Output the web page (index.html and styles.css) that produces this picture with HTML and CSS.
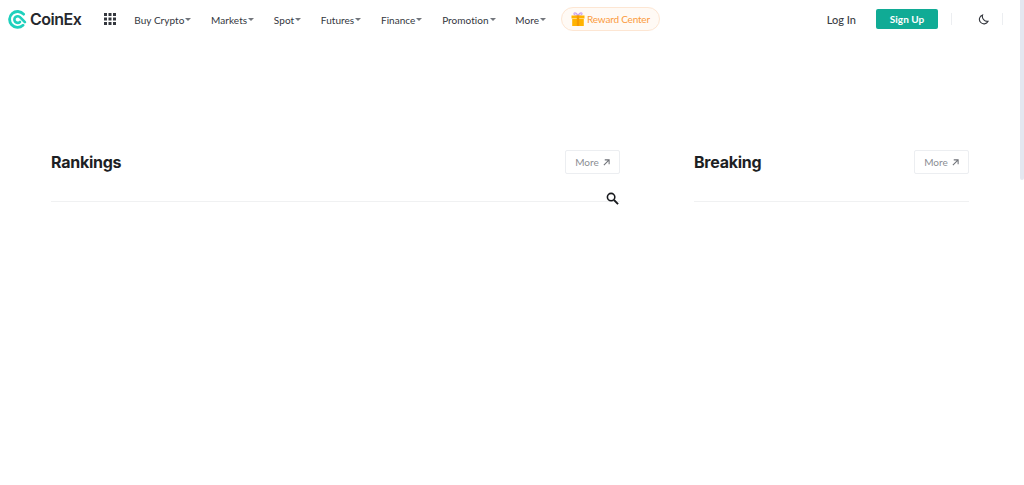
FILE: index.html
```html
<!DOCTYPE html>
<html>
<head>
  <title>CoinEx</title>
  <link rel="stylesheet" href="styles.css">
</head>
<body>
  <header class="nav">
    <a class="logo">
      <svg class="logo-mark" width="19" height="19" viewBox="0 0 20 20" fill="none">
        <path d="M16.4 4.4A8.4 8.4 0 1 0 15.8 16.1" stroke="#1fd0bd" stroke-width="3" stroke-linecap="round"/>
        <path d="M12.6 12.6A3.5 3.5 0 1 1 12.9 7.8L17.8 12.8" stroke="#1fd0bd" stroke-width="2.8" stroke-linecap="round"/>
      </svg>
      <span>CoinEx</span>
    </a>
    <svg class="apps" width="12" height="12" viewBox="0 0 12 12" fill="#33363d">
      <rect x="0" y="0" width="3" height="3"/><rect x="4.5" y="0" width="3" height="3"/><rect x="9" y="0" width="3" height="3"/>
      <rect x="0" y="4.5" width="3" height="3"/><rect x="4.5" y="4.5" width="3" height="3"/><rect x="9" y="4.5" width="3" height="3"/>
      <rect x="0" y="9" width="3" height="3"/><rect x="4.5" y="9" width="3" height="3"/><rect x="9" y="9" width="3" height="3"/>
    </svg>
    <nav class="menu">
      <a class="menu-item">Buy Crypto</a>
      <a class="menu-item">Markets</a>
      <a class="menu-item">Spot</a>
      <a class="menu-item">Futures</a>
      <a class="menu-item">Finance</a>
      <a class="menu-item">Promotion</a>
      <a class="menu-item">More</a>
    </nav>
    <a class="reward">
      <svg width="14" height="14" viewBox="0 0 14 14">
        <path d="M7 3.5C5 0 2.5 0.5 3 2.2 3.3 3.2 5 3.5 7 3.5ZM7 3.5C9 0 11.5 0.5 11 2.2 10.7 3.2 9 3.5 7 3.5Z" fill="none" stroke="#c9a2ee" stroke-width="1.1"/>
        <rect x="0.5" y="3.5" width="13" height="3" fill="#ffb300"/>
        <rect x="1.2" y="7" width="11.6" height="7" fill="#ffb300"/>
        <rect x="5.8" y="3.5" width="2.4" height="10.5" fill="#f59a00"/>
      </svg>
      <span>Reward Center</span>
    </a>
    <div class="nav-right">
      <a class="login">Log In</a>
      <a class="signup">Sign Up</a>
      <i class="divider"></i>
      <svg class="moon" width="11" height="11" viewBox="0 0 12 12" fill="none">
        <path d="M5 1A5 5 0 1 0 11 8 5.5 5.5 0 0 1 5 1Z" stroke="#33363d" stroke-width="1.2"/>
      </svg>
      <i class="divider"></i>
    </div>
  </header>

  <main class="content">
    <section class="rankings">
      <div class="section-head">
        <h2>Rankings</h2>
        <a class="more">More
          <svg width="7" height="7" viewBox="0 0 8 8" fill="none"><path d="M1 7 7 1M2 1H7V6" stroke="#6f7278" stroke-width="1.2"/></svg>
        </a>
      </div>
      <svg class="search" width="13" height="13" viewBox="0 0 14 14" fill="none">
        <circle cx="5.5" cy="5.5" r="4" stroke="#17191d" stroke-width="1.7"/>
        <path d="M8.6 8.6 13 13" stroke="#17191d" stroke-width="2"/>
      </svg>
    </section>
    <section class="breaking">
      <div class="section-head">
        <h2>Breaking</h2>
        <a class="more">More
          <svg width="7" height="7" viewBox="0 0 8 8" fill="none"><path d="M1 7 7 1M2 1H7V6" stroke="#6f7278" stroke-width="1.2"/></svg>
        </a>
      </div>
    </section>
  </main>

  <div class="scroll-thumb"></div>
</body>
</html>
```

FILE: styles.css
```css
html, body {
  margin: 0;
  height: 100%;
  overflow: hidden;
}
body {
  font-family: "Lato", "Open Sans", sans-serif;
  background: #fff;
  color: #33363d;
}
a { text-decoration: none; }

.nav {
  display: flex;
  align-items: center;
  height: 38px;
  padding-left: 8px;
  padding-right: 21px;
}
.logo {
  display: flex;
  align-items: center;
  gap: 3px;
  font-family: "Inter", sans-serif;
  font-size: 16px;
  font-weight: 600;
  letter-spacing: -0.5px;
  color: #26282d;
}
.apps { margin-left: 23px; }
.menu {
  display: flex;
  gap: 19.7px;
  margin-left: 18px;
  padding-top: 1px;
}
.menu-item {
  display: flex;
  align-items: center;
  font-size: 10px;
  font-weight: 400;
  letter-spacing: 0.05px;
  color: #33363d;
}
.menu-item::after {
  content: "";
  border: 3px solid transparent;
  border-top: 3px solid #73767c;
  border-bottom: 0;
  margin-left: 1px;
}
.reward {
  display: flex;
  align-items: center;
  gap: 2px;
  height: 24px;
  margin-left: 15px;
  padding: 0 9px;
  box-sizing: border-box;
  border: 1px solid #fde6d3;
  border-radius: 12px;
  background: #fffaf5;
  font-size: 10px;
  font-weight: 400;
  letter-spacing: -0.2px;
  color: #fb9a3c;
}
.nav-right {
  display: flex;
  align-items: center;
  margin-left: auto;
}
.login {
  font-size: 11px;
  font-weight: 500;
  color: #3a3d44;
}
.signup {
  margin-left: 20px;
  width: 62px;
  height: 20px;
  line-height: 20px;
  text-align: center;
  border-radius: 2px;
  background: #10ab95;
  color: #fff;
  font-size: 10px;
  font-weight: 700;
}
.divider {
  width: 1px;
  height: 12px;
  background: #eceef1;
}
.nav-right > .divider:nth-of-type(1) { margin-left: 13px; }
.moon { margin: 0 13px 0 26px; }

.content {
  display: flex;
  padding-top: 112px;
  padding-left: 51px;
}
.rankings {
  position: relative;
  width: 569px;
}
.breaking {
  width: 275px;
  margin-left: 74px;
}
.section-head {
  display: flex;
  align-items: flex-start;
  justify-content: space-between;
  height: 50px;
  padding-bottom: 1px;
  border-bottom: 1px solid #f0f1f2;
}
.section-head h2 {
  margin: 0;
  line-height: 24px;
  font-family: "Inter", sans-serif;
  font-size: 16px;
  font-weight: 700;
  letter-spacing: -0.25px;
  color: #1d1f24;
}
.more {
  display: flex;
  align-items: center;
  justify-content: center;
  gap: 4px;
  width: 55px;
  height: 24px;
  box-sizing: border-box;
  border: 1px solid #eceef1;
  border-radius: 2px;
  font-size: 10px;
  color: #8b8e94;
}
.search {
  position: absolute;
  right: 1px;
  top: 42px;
}
.scroll-thumb {
  position: absolute;
  top: 0;
  right: 0;
  width: 4px;
  height: 180px;
  background: #e4e7f0;
  border-radius: 0 0 2px 2px;
}
```
